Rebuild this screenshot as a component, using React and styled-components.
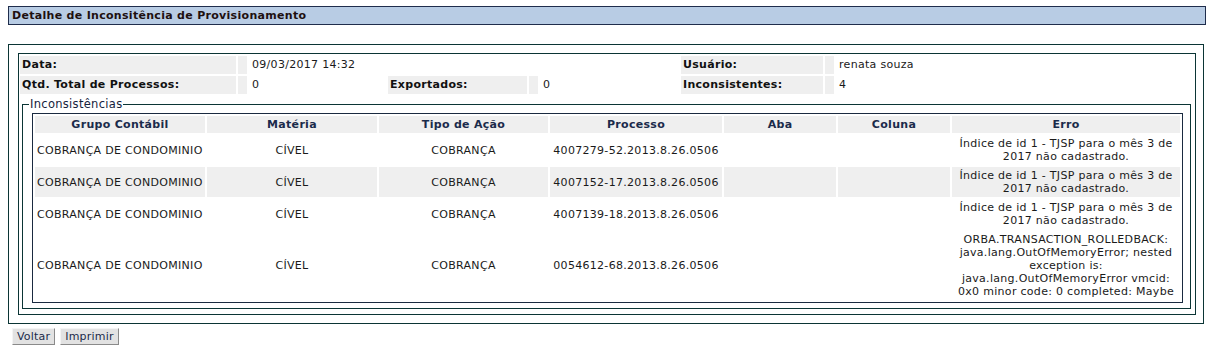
import React from "react";
import styled, { createGlobalStyle } from "styled-components";

const GlobalStyle = createGlobalStyle`
  body {
    margin: 0;
    background: #ffffff;
    font-family: "DejaVu Sans", Verdana, sans-serif;
    font-size: 11px;
    letter-spacing: 0.3px;
    color: #1a1a1a;
  }
`;

const info = [
  [
    { label: "Data:", value: "09/03/2017 14:32" },
    null,
    { label: "Usuário:", value: "renata souza" },
  ],
  [
    { label: "Qtd. Total de Processos:", value: "0" },
    { label: "Exportados:", value: "0" },
    { label: "Inconsistentes:", value: "4" },
  ],
];

const indice = "Índice de id 1 - TJSP para o mês 3 de 2017 não cadastrado.";

const rows = [
  { processo: "4007279-52.2013.8.26.0506", erro: indice },
  { processo: "4007152-17.2013.8.26.0506", erro: indice, alt: true },
  { processo: "4007139-18.2013.8.26.0506", erro: indice },
  {
    processo: "0054612-68.2013.8.26.0506",
    erro:
      "ORBA.TRANSACTION_ROLLEDBACK: java.lang.OutOfMemoryError; nested exception is: java.lang.OutOfMemoryError vmcid: 0x0 minor code: 0 completed: Maybe",
  },
];

const App = () => {
  return (
    <>
      <GlobalStyle />
      <Page>
        <TitleBar>Detalhe de Inconsitência de Provisionamento</TitleBar>
        <OuterBox>
          <InnerBox>
            <InfoGrid>
              {info.map((line, i) =>
                line.map((item, j) =>
                  item ? (
                    <React.Fragment key={`${i}-${j}`}>
                      <Label>{item.label}</Label>
                      <Spacer />
                      <Value>{item.value}</Value>
                    </React.Fragment>
                  ) : (
                    <React.Fragment key={`${i}-${j}`}>
                      <Value />
                      <Value />
                      <Value />
                    </React.Fragment>
                  )
                )
              )}
            </InfoGrid>
            <Fieldset>
              <Legend>Inconsistências</Legend>
              <Table>
                <colgroup>
                  <col style={{ width: 170 }} />
                  <col style={{ width: 170 }} />
                  <col style={{ width: 169 }} />
                  <col style={{ width: 172 }} />
                  <col style={{ width: 112 }} />
                  <col style={{ width: 112 }} />
                  <col />
                </colgroup>
                <thead>
                  <tr>
                    <Th>Grupo Contábil</Th>
                    <Th>Matéria</Th>
                    <Th>Tipo de Ação</Th>
                    <Th>Processo</Th>
                    <Th>Aba</Th>
                    <Th>Coluna</Th>
                    <Th>Erro</Th>
                  </tr>
                </thead>
                <tbody>
                  {rows.map((r) => (
                    <Row key={r.processo} $alt={r.alt}>
                      <Td $left>COBRANÇA DE CONDOMINIO</Td>
                      <Td>CÍVEL</Td>
                      <Td>COBRANÇA</Td>
                      <Td>{r.processo}</Td>
                      <Td />
                      <Td />
                      <Td>{r.erro}</Td>
                    </Row>
                  ))}
                </tbody>
              </Table>
            </Fieldset>
          </InnerBox>
        </OuterBox>
        <Actions>
          <Button type="button">Voltar</Button>
          <Button type="button">Imprimir</Button>
        </Actions>
      </Page>
    </>
  );
};

export default App;

const Page = styled.div`
  padding: 6px 8px;
`;

const TitleBar = styled.div`
  height: 17px;
  line-height: 17px;
  border: 1px solid #1f2d4c;
  background-color: #b8cce4;
  padding-left: 3px;
  font-weight: bold;
  color: #1e1010;
`;

const OuterBox = styled.div`
  margin-top: 19px;
  margin-right: 2px;
  border: 1px solid #0b3535;
  padding: 8px 7px 8px 9px;
`;

const InnerBox = styled.div`
  border: 1px solid #0b3535;
  padding: 2px 4px 5px 1px;
`;

const InfoGrid = styled.div`
  display: grid;
  grid-template-columns: 216px 9px 137px 139px 9px 139px 142px 9px 1fr;
  grid-auto-rows: 18px;
  gap: 2px;
`;

const Label = styled.div`
  background-color: #efefef;
  font-weight: bold;
  color: #111;
  padding: 0 2px;
  line-height: 18px;
  white-space: nowrap;
`;

const Spacer = styled.div`
  background-color: #efefef;
`;

const Value = styled.div`
  padding: 0 3px;
  line-height: 18px;
  white-space: nowrap;
`;

const Fieldset = styled.fieldset`
  margin: 4px 0 0 2px;
  border: 1px solid #0b3535;
  padding: 2px 7px 5px 9px;
`;

const Legend = styled.legend`
  margin-left: -3px;
  padding: 0 1px;
  color: #16233d;
  font-size: 11.5px;
  line-height: 13px;
`;

const Table = styled.table`
  width: 100%;
  table-layout: fixed;
  border: 1px solid #1a2a40;
  border-spacing: 2px;
`;

const Th = styled.th`
  background-color: #efefef;
  color: #1b2b4b;
  font-weight: bold;
  text-align: center;
  line-height: 13px;
  padding: 2px 2px;
`;

const Row = styled.tr`
  background-color: ${(p) => (p.$alt ? "#efefef" : "#ffffff")};
`;

const Td = styled.td`
  text-align: ${(p) => (p.$left ? "left" : "center")};
  line-height: 13px;
  padding: 2px 2px;
  color: #1a1a1a;
`;

const Actions = styled.div`
  display: flex;
  gap: 5px;
  margin: 4px 0 0 4px;
`;

const Button = styled.button`
  height: 17px;
  padding: 0 4px;
  font-family: inherit;
  font-size: 11px;
  letter-spacing: 0.2px;
  color: #1b2b4b;
  background-color: #e2e2e2;
  border: 1px solid;
  border-color: #f4f4f4 #8a8a8a #8a8a8a #f4f4f4;
  line-height: 15px;
`;
